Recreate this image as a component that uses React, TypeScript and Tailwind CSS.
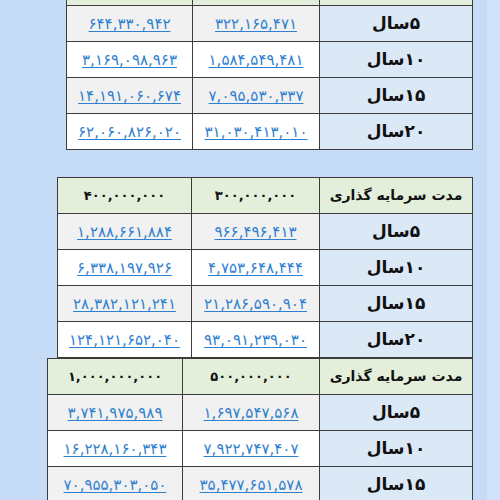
import React from 'react';

const fa = (s: string) => s.replace(/\d/g, (d) => '۰۱۲۳۴۵۶۷۸۹'[Number(d)]);

type TableProps = {
  width: string;
  widths: [string, string, string];
  headers: [string, string];
  rows: { label: string; a: string; b: string }[];
  className?: string;
};

const YearTable = ({ width, widths, headers, rows, className }: TableProps) => {
  return (
    <table dir="rtl" className={`border-collapse table-fixed shrink-0 ${width} ${className ?? ''}`}>
      <colgroup>
        <col className={widths[0]} />
        <col className={widths[1]} />
        <col className={widths[2]} />
      </colgroup>
      <thead>
        <tr className="bg-[#e3efda]">
          <th className="h-[36px] p-0 border border-[#3c3c3c] text-[14px] font-bold text-[#111] whitespace-nowrap">
            مدت سرمایه گذاری
          </th>
          <th className="h-[36px] p-0 border border-[#3c3c3c] text-[13px] font-bold text-[#111]">
            {fa(headers[0])}
          </th>
          <th className="h-[36px] p-0 border border-[#3c3c3c] text-[13px] font-bold text-[#111]">
            {fa(headers[1])}
          </th>
        </tr>
      </thead>
      <tbody>
        {rows.map((r, i) => (
          <tr key={r.label} className={i % 2 === 0 ? 'bg-[#f1f1f1]' : 'bg-white'}>
            <td className="h-[36px] p-0 border border-[#3c3c3c] bg-[#dbe8f6] text-center text-[17px] font-bold text-[#111]">
              {fa(r.label)}سال
            </td>
            <td className="h-[36px] p-0 border border-[#3c3c3c] text-center whitespace-nowrap">
              <a href="#" className="text-[15px] text-[#2f80cf] underline underline-offset-2">
                {fa(r.a)}
              </a>
            </td>
            <td className="h-[36px] p-0 border border-[#3c3c3c] text-center whitespace-nowrap">
              <a href="#" className="text-[15px] text-[#2f80cf] underline underline-offset-2">
                {fa(r.b)}
              </a>
            </td>
          </tr>
        ))}
      </tbody>
    </table>
  );
};

export default function App() {
  return (
    <div
      className="w-[500px] h-[500px] overflow-hidden bg-[#c6dcf6] flex"
      style={{ fontFamily: '"DejaVu Sans", sans-serif' }}
    >
      <div className="flex-1 flex flex-col items-end pr-[14px]">
        <YearTable
          className="-mt-[31px]"
          width="w-[406px]"
          widths={['w-[153px]', 'w-[127px]', 'w-[126px]']}
          headers={['100,000,000', '200,000,000']}
          rows={[
            { label: '5', a: '322,165,471', b: '644,330,942' },
            { label: '10', a: '1,584,549,481', b: '3,169,098,963' },
            { label: '15', a: '7,095,530,337', b: '14,191,060,674' },
            { label: '20', a: '31,030,413,010', b: '62,060,826,020' },
          ]}
        />
        <YearTable
          className="mt-[27px]"
          width="w-[415px]"
          widths={['w-[153px]', 'w-[128px]', 'w-[134px]']}
          headers={['300,000,000', '400,000,000']}
          rows={[
            { label: '5', a: '966,496,413', b: '1,288,661,884' },
            { label: '10', a: '4,753,648,444', b: '6,338,197,926' },
            { label: '15', a: '21,286,590,904', b: '28,382,121,241' },
            { label: '20', a: '93,091,239,030', b: '124,121,652,040' },
          ]}
        />
        <YearTable
          width="w-[425px]"
          widths={['w-[153px]', 'w-[137px]', 'w-[135px]']}
          headers={['500,000,000', '1,000,000,000']}
          rows={[
            { label: '5', a: '1,697,547,568', b: '3,741,975,989' },
            { label: '10', a: '7,922,747,407', b: '16,228,160,343' },
            { label: '15', a: '35,477,651,578', b: '70,955,303,050' },
          ]}
        />
      </div>
      <div className="w-[13px] shrink-0 bg-[#d0e3fa]" />
    </div>
  );
}
